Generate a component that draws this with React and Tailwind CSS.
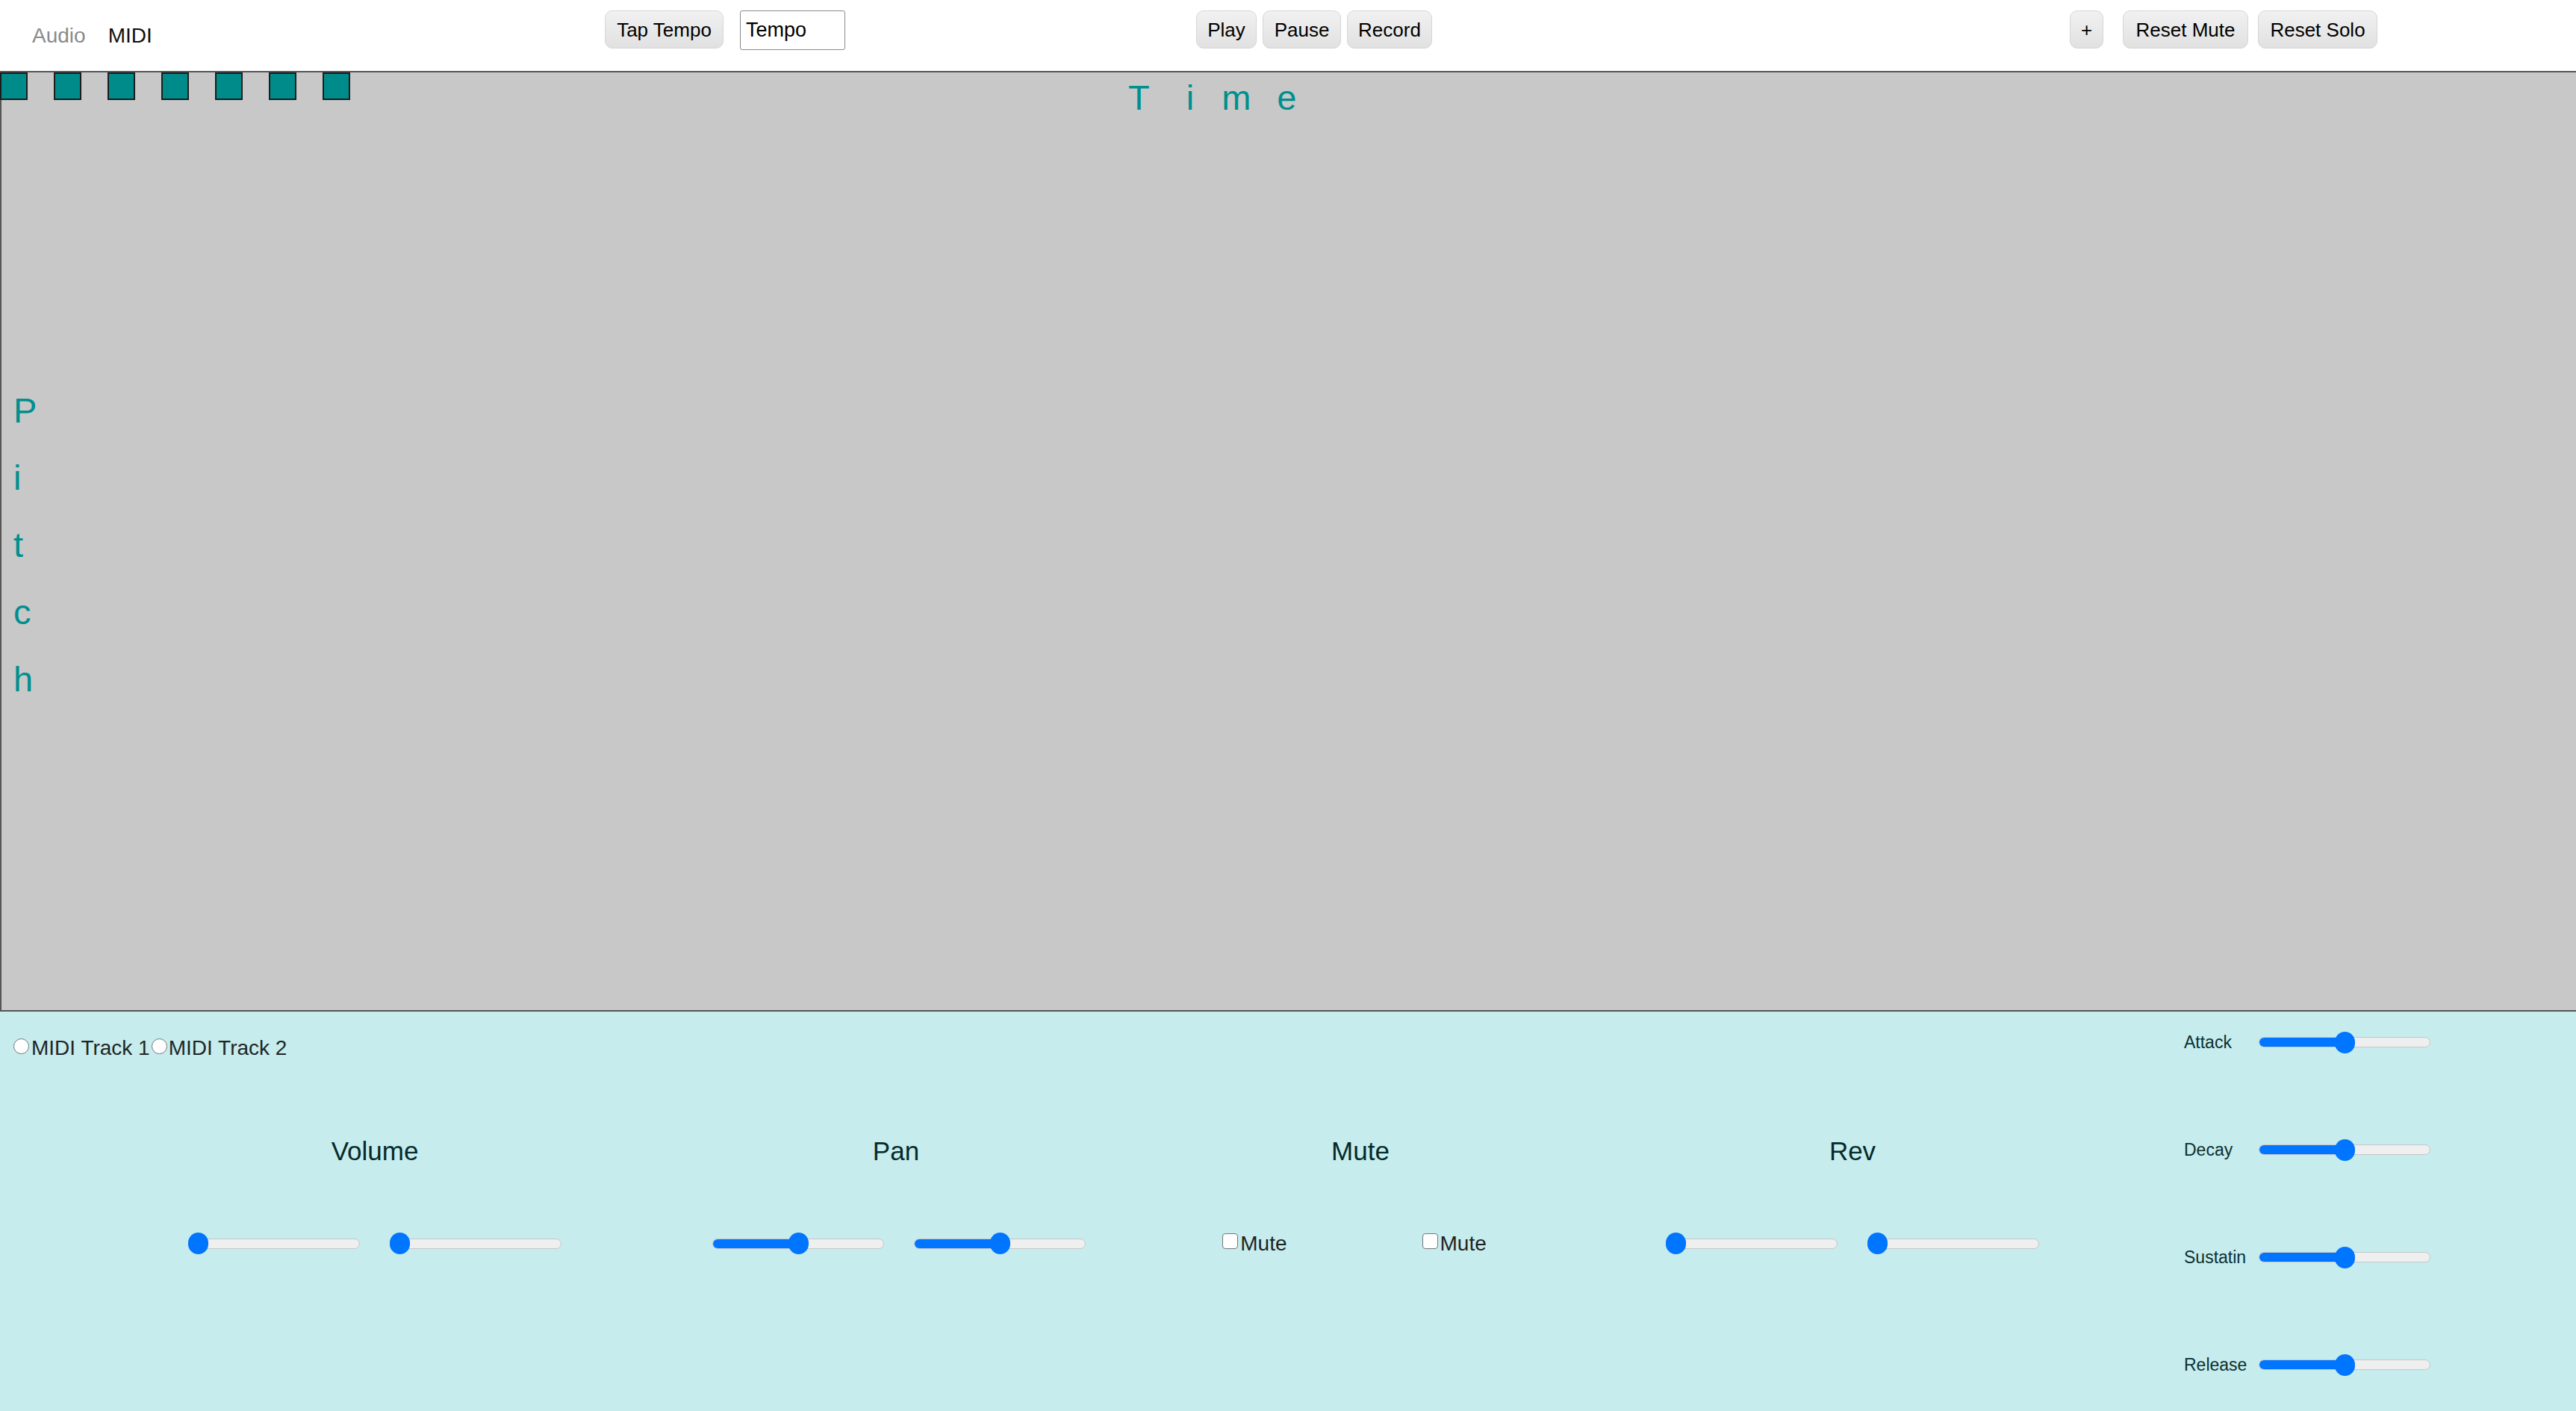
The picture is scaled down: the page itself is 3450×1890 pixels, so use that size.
import React from "react";

const font = { fontFamily: '"Liberation Sans", Arial, sans-serif' };

function Btn({ w, children }) {
  return (
    <button
      className={`${w} h-[51px] shrink-0 rounded-[10px] border border-[#d6d6d6] bg-gradient-to-b from-[#f1f1f1] to-[#e1e1e1] text-[26px] leading-none text-black`}
    >
      {children}
    </button>
  );
}

function Slider({ value }) {
  const left = (value / 100) * (230 - 27);
  return (
    <div className="relative w-[230px] h-[29px] flex items-center shrink-0">
      <div className="w-full h-[14px] rounded-full bg-[#efefef] border border-[#c6c6c6] overflow-hidden">
        <div className="h-full bg-[#0075ff]" style={{ width: left + 13 }} />
      </div>
      <div className="absolute top-0 w-[27px] h-[29px] rounded-full bg-[#0075ff]" style={{ left }} />
    </div>
  );
}

function Column({ w, title, children }) {
  return (
    <div className={`${w} flex flex-col items-center shrink-0`}>
      <div className="text-[35px] leading-[40px] text-[#042a2a]">{title}</div>
      <div className="mt-[89px] flex items-center">{children}</div>
    </div>
  );
}

function MuteBox() {
  return (
    <div className="flex items-center h-[29px]">
      <span className="w-[21px] h-[21px] mb-[6px] rounded-[4px] border-[1.5px] border-[#767676] bg-white" />
      <span className="ml-[3px] text-[28px] leading-[29px] text-[#222]">Mute</span>
    </div>
  );
}

const adsr = ["Attack", "Decay", "Sustatin", "Release"];

export default function App() {
  return (
    <div className="w-[3450px] h-[1890px] overflow-hidden bg-white" style={font}>
      {/* top bar */}
      <div className="h-[95px] flex items-start">
        <div className="w-[810px] shrink-0 flex gap-[30px] pl-[43px] pt-[32px] text-[28px] leading-[32px]">
          <span className="text-[#8a8a8a]">Audio</span>
          <span className="text-[#111]">MIDI</span>
        </div>
        <div className="flex items-start gap-[22px] pt-[14px]">
          <Btn w="w-[159px]">Tap Tempo</Btn>
          <div className="w-[141px] h-[53px] border border-[#8a8a8a] rounded-[3px] pl-[7px] flex items-center text-[27px] text-black">
            Tempo
          </div>
        </div>
        <div className="ml-[470px] flex gap-[8px] pt-[14px]">
          <Btn w="w-[81px]">Play</Btn>
          <Btn w="w-[105px]">Pause</Btn>
          <Btn w="w-[114px]">Record</Btn>
        </div>
        <div className="ml-[854px] flex pt-[14px]">
          <Btn w="w-[45px]">+</Btn>
          <div className="ml-[26px] flex gap-[13px]">
            <Btn w="w-[168px]">Reset Mute</Btn>
            <Btn w="w-[160px]">Reset Solo</Btn>
          </div>
        </div>
      </div>

      {/* piano roll canvas */}
      <div className="h-[1260px] border-y-2 border-l-2 border-[#555] bg-[#c8c8c8] flex flex-col">
        <div className="h-[57px] flex items-start shrink-0">
          <div className="flex gap-[35px] -ml-[2px]">
            {Array.from({ length: 7 }).map((_, i) => (
              <div key={i} className="w-[37px] h-[37px] border-2 border-[#1c1c1c] bg-[#008b8b]" />
            ))}
          </div>
          <div className="ml-[1042px] mt-[10px] flex text-[47px] leading-none text-[#008f8f]">
            <span>T</span>
            <span className="ml-[49px]">i</span>
            <span className="ml-[37px]">m</span>
            <span className="ml-[35px]">e</span>
          </div>
        </div>
        <div className="pt-[351px] pl-[16px] flex flex-col text-[47px] leading-[90px] text-[#008f8f]">
          {"Pitch".split("").map((c, i) => (
            <span key={i}>{c}</span>
          ))}
        </div>
      </div>

      {/* mixer panel */}
      <div className="h-[535px] bg-[#c6eced] flex">
        <div className="w-[2866px] shrink-0 flex flex-col">
          <div className="pt-[33px] pl-[18px] flex items-start text-[28px] leading-[32px] text-[#1e2626]">
            <span className="w-[21px] h-[21px] mt-[3px] rounded-full border-[1.5px] border-[#767676] bg-white" />
            <span className="ml-[3px]">MIDI Track 1</span>
            <span className="ml-[2px] w-[21px] h-[21px] mt-[3px] rounded-full border-[1.5px] border-[#767676] bg-white" />
            <span className="ml-[2px]">MIDI Track 2</span>
          </div>
          <div className="mt-[102px] flex pl-[152px]">
            <Column w="w-[700px]" title="Volume">
              <div className="flex gap-[40px]">
                <Slider value={0} />
                <Slider value={0} />
              </div>
            </Column>
            <Column w="w-[696px]" title="Pan">
              <div className="flex gap-[40px] ml-[8px]">
                <Slider value={50} />
                <Slider value={50} />
              </div>
            </Column>
            <Column w="w-[548px]" title="Mute">
              <div className="flex gap-[181px] mr-[16px]">
                <MuteBox />
                <MuteBox />
              </div>
            </Column>
            <Column w="w-[770px]" title="Rev">
              <div className="flex gap-[40px]">
                <Slider value={0} />
                <Slider value={0} />
              </div>
            </Column>
          </div>
        </div>
        <div className="pl-[59px] pt-[26px] flex flex-col gap-[114px]">
          {adsr.map((l) => (
            <div key={l} className="flex items-center h-[30px]">
              <span className="w-[100px] text-[23px] text-[#0a3030]">{l}</span>
              <Slider value={50} />
            </div>
          ))}
        </div>
      </div>
    </div>
  );
}
